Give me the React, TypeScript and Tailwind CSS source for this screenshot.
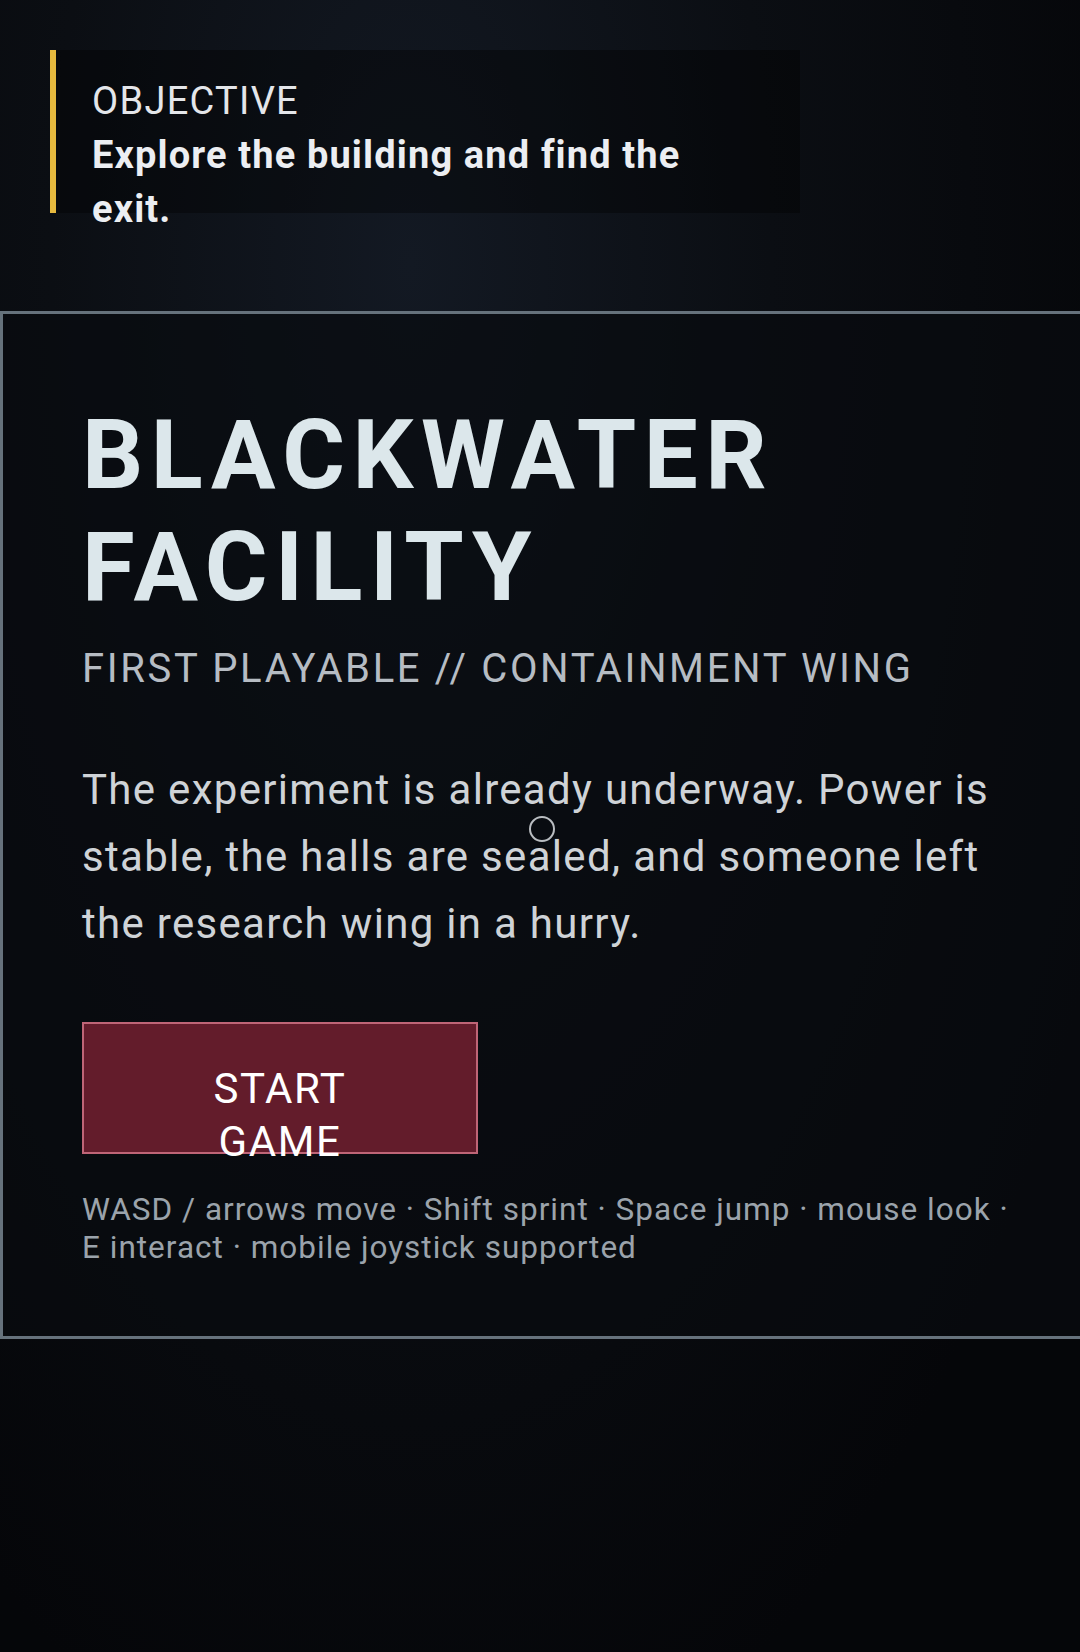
import React from "react";

const CONTROLS =
  "WASD / arrows move · Shift sprint · Space jump · mouse look · E interact · mobile joystick supported";

function ObjectiveBanner() {
  return (
    <div className="h-[311px] pt-[50px]">
      <div className="ml-[50px] h-[163px] w-[750px] border-l-[6px] border-[#e6b93e] bg-black/35 pl-[36px] pr-[56px] pt-[24px]">
        <p className="text-[38px] leading-[54px] tracking-[0.034em] text-[#e4e6ea]">OBJECTIVE</p>
        <p className="text-[38px] font-bold leading-[54px] tracking-[0.03em] text-[#eceef2]">
          Explore the building and find the exit.
        </p>
      </div>
    </div>
  );
}

function TitleCard() {
  return (
    <section className="border-y-[3px] border-l-[3px] border-[#66727c] bg-[#090c10]/70 pb-[69px] pl-[79px] pr-[58px] pt-[85px]">
      <h1 className="text-[96px] font-bold leading-[112px] tracking-[0.078em] text-[#dce7eb]">
        BLACKWATER FACILITY
      </h1>
      <p className="mt-[22px] text-[40px] leading-[48px] tracking-[0.066em] text-[#b6bcc3]">
        FIRST PLAYABLE // CONTAINMENT WING
      </p>
      <p className="mt-[63px] text-[42px] leading-[67px] tracking-[0.031em] text-[#cfd3d7]">
        The experiment is already underway. Power is stable, the halls are
        sealed, and someone left the research wing in a hurry.
      </p>
      <button
        type="button"
        className="mt-[65px] block h-[132px] w-[396px] border-2 border-[#bf6577] bg-[#631c2b] px-[76px] pt-[38px] text-center text-[42px] leading-[53px] tracking-[0.038em] text-white"
      >
        START GAME
      </button>
      <p className="mt-[37px] text-[31.5px] leading-[38px] tracking-[0.032em] text-[#9ba3ab]">
        {CONTROLS}
      </p>
    </section>
  );
}

export default function App() {
  return (
    <div className="relative min-h-screen w-full overflow-hidden bg-[radial-gradient(ellipse_at_38%_16%,#131923_0%,#0b0e13_38%,#050609_80%)] font-['Roboto','Liberation_Sans',sans-serif]">
      <ObjectiveBanner />
      <TitleCard />
      {/* pointer reticle */}
      <div className="pointer-events-none absolute left-[529px] top-[816px] h-[26px] w-[26px] rounded-full border-2 border-[#b9bdc1]" />
    </div>
  );
}
